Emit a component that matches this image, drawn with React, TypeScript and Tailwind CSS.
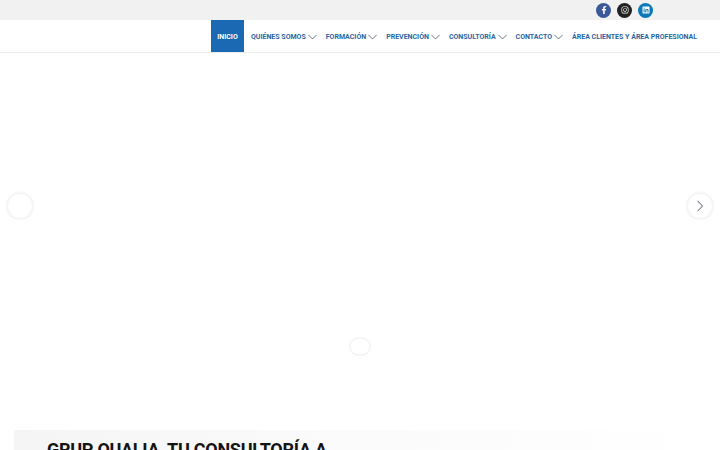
import React from "react";
import { FaFacebookF, FaInstagram, FaLinkedin } from "react-icons/fa";

const items: { label: string; caret: boolean }[] = [
  { label: "QUIÉNES SOMOS", caret: true },
  { label: "FORMACIÓN", caret: true },
  { label: "PREVENCIÓN", caret: true },
  { label: "CONSULTORÍA", caret: true },
  { label: "CONTACTO", caret: true },
  { label: "ÁREA CLIENTES Y ÁREA PROFESIONAL", caret: false },
];

function Caret() {
  return (
    <svg width="9" height="6" viewBox="0 0 9 6" fill="none" className="ml-[2px] mt-px shrink-0" stroke="#475569" strokeWidth="0.8">
      <path d="M0.3 0.8 L4.5 5 L8.7 0.8" />
    </svg>
  );
}

function Social({ bg, children }: { bg: string; children: React.ReactNode }) {
  return <div className={`w-[15px] h-[15px] rounded-full flex items-center justify-center text-white text-[8px] ${bg}`}>{children}</div>;
}

export default function App() {
  return (
    <div className="w-[720px] h-[450px] overflow-hidden bg-white flex flex-col font-['Roboto',sans-serif]">
      <div className="h-[20px] shrink-0 bg-[#f1f1f1] flex items-center justify-end gap-[6px] pr-[67px]">
        <Social bg="bg-[#3b5998]"><FaFacebookF /></Social>
        <Social bg="bg-[#222222]"><FaInstagram /></Social>
        <Social bg="bg-[#0b78b7]"><FaLinkedin /></Social>
      </div>

      <nav className="h-[33px] shrink-0 flex items-stretch pl-[211px] gap-[9px] border-b border-[#ececec] bg-white">
        <div className="w-[33px] shrink-0 mr-[-2px] pt-[2px] bg-[#1b69b3] text-white text-[7px] font-bold flex items-center justify-center">INICIO</div>
        {items.map((it) => (
          <div key={it.label} className="flex items-center shrink-0 text-[#2a66a3] text-[7px] font-bold whitespace-nowrap">
            <span className="pt-[2px]">{it.label}</span>
            {it.caret && <Caret />}
          </div>
        ))}
      </nav>

      <main className="relative flex-1 overflow-hidden bg-white">
        <button className="absolute left-[7px] top-[140px] w-[26px] h-[26px] rounded-full bg-white border border-[#f6f6f6] shadow-[0_0_3px_rgba(0,0,0,0.1)]" />
        <button className="absolute left-[687px] top-[140px] w-[26px] h-[26px] rounded-full bg-white border border-[#f6f6f6] shadow-[0_0_3px_rgba(0,0,0,0.1)] flex items-center justify-center">
          <svg width="8" height="12" viewBox="0 0 8 12" fill="none" stroke="#4b5563" strokeWidth="1"><path d="M1.5 0.8 L6.5 6 L1.5 11.2" /></svg>
        </button>
        <div className="absolute left-[349px] top-[284px] w-[22px] h-[19px] rounded-[9px] border-[2px] border-[#f5f5f5]" />

        <div className="absolute left-[14px] top-[377px] w-[700px] h-[80px] bg-gradient-to-r from-[#f5f5f5] via-[#fbfbfb] to-white pl-[33px] pt-[8px]">
          <h1 className="text-[18px] leading-[24px] font-bold text-[#141414] whitespace-nowrap tracking-[-0.27px]">GRUP QUALIA, TU CONSULTORÍA A</h1>
        </div>
      </main>
    </div>
  );
}
